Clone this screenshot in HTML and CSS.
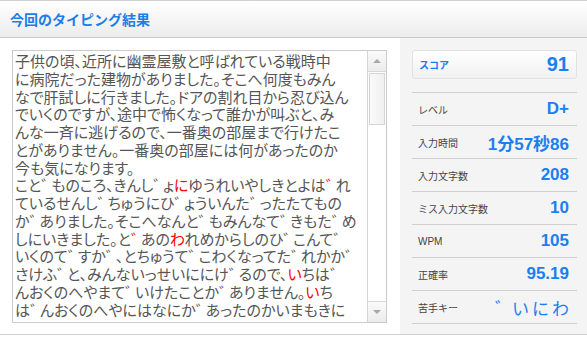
FILE: index.html
```html
<!DOCTYPE html>
<html lang="ja">
<head>
  <meta charset="UTF-8">
  <title>今回のタイピング結果</title>
  <link rel="stylesheet" href="styles.css">
</head>
<body>
  <div class="result">
    <h1 class="result-title">今回のタイピング結果</h1>

    <div class="result-body">
      <!-- typed text -->
      <div class="text-pane">
        <div class="text-box">
          <div class="text-lines">
            <div>子供の頃、近所に幽霊屋敷と呼ばれている戦時中</div>
            <div>に病院だった建物がありました。そこへ何度もみん</div>
            <div>なで肝試しに行きました。ドアの割れ目から忍び込ん</div>
            <div>でいくのですが、途中で怖くなって誰かが叫ぶと、み</div>
            <div>んな一斉に逃げるので、一番奥の部屋まで行けたこ</div>
            <div>とがありません。一番奥の部屋には何があったのか</div>
            <div>今も気になります。</div>
            <div>こと<i>゛</i>ものころ、きんし<i>゛</i>ょ<span class="miss">に</span>ゆうれいやしきとよは<i class="miss">゛</i>れ</div>
            <div>ているせんし<i>゛</i>ちゅうにひ<i>゛</i>ょういんた<i>゛</i>ったたてもの</div>
            <div>か<i>゛</i>ありました。そこへなんと<i>゛</i>もみんなて<i>゛</i>きもた<i>゛</i>め</div>
            <div>しにいきました。と<i class="miss">゛</i>あの<span class="miss">わ</span>れめからしのひ<i>゛</i>こんて<i>゛</i></div>
            <div>いくのて<i>゛</i>すか<i>゛</i>、とちゅうて<i>゛</i>こわくなってた<i>゛</i>れかか<i>゛</i></div>
            <div>さけふ<i>゛</i>と、みんないっせいににけ<i>゛</i>るので、<span class="miss">い</span>ちは<i>゛</i></div>
            <div>んおくのへやまて<i>゛</i>いけたことか<i>゛</i>ありません。<span class="miss">い</span>ち</div>
            <div>は<i>゛</i>んおくのへやにはなにか<i>゛</i>あったのかいまもきに</div>
          </div>
          <div class="scrollbar">
            <div class="sb-btn"><span class="arrow-up"></span></div>
            <div class="sb-track"><div class="sb-thumb"></div></div>
            <div class="sb-btn"><span class="arrow-down"></span></div>
          </div>
        </div>
      </div>

      <!-- scores -->
      <div class="stats">
        <div class="score-box">
          <span class="score-label">スコア</span>
          <span class="score-value">91</span>
        </div>
        <ul class="stat-list">
          <li><span class="stat-label">レベル</span><span class="stat-value">D+</span></li>
          <li><span class="stat-label">入力時間</span><span class="stat-value">1分57秒86</span></li>
          <li><span class="stat-label">入力文字数</span><span class="stat-value">208</span></li>
          <li><span class="stat-label">ミス入力文字数</span><span class="stat-value">10</span></li>
          <li><span class="stat-label">WPM</span><span class="stat-value">105</span></li>
          <li><span class="stat-label">正確率</span><span class="stat-value">95.19</span></li>
          <li><span class="stat-label">苦手キー</span><span class="stat-value weak-keys"><i>゛</i>いにわ</span></li>
        </ul>
      </div>
    </div>
  </div>
</body>
</html>
```

FILE: styles.css
```css
body {
  margin: 0;
  font-family: "Liberation Sans", "Noto Sans CJK JP", sans-serif;
  background: #fff;
}
i {
  font-style: normal;
}
.result {
  border-top: 1px solid #d0d0d0;
  border-bottom: 1px solid #cfcfcf;
  height: 333px;
  display: flex;
  flex-direction: column;
}
.result-title {
  flex-shrink: 0;
  margin: 0;
  height: 36px;
  padding-left: 10px;
  display: flex;
  align-items: center;
  font-size: 14px;
  font-weight: bold;
  color: #1b7fe8;
  background: linear-gradient(#ffffff, #ececec);
  border-bottom: 1px solid #c9c9c9;
}
.result-body {
  flex: 1;
  min-height: 0;
  display: flex;
}
.text-pane {
  width: 400px;
  padding: 12px 13px 11px 12px;
  box-sizing: border-box;
}
.text-box {
  height: 100%;
  display: flex;
  border: 1px solid #cbcbcb;
  box-sizing: border-box;
}
.text-lines {
  flex: 1;
  overflow: hidden;
  padding: 1px 0 0 2px;
  font-family: "Noto Sans CJK JP", sans-serif;
  font-feature-settings: "palt";
  font-size: 15px;
  line-height: 17.75px;
  color: #555;
  white-space: nowrap;
}
.text-lines i {
  letter-spacing: -6px;
  margin-right: 1px;
}
.miss {
  color: #f00;
}
.scrollbar {
  width: 18px;
  display: flex;
  flex-direction: column;
  border-left: 1px solid #d4d4d4;
  background: #fff;
}
.sb-btn {
  height: 20px;
  display: flex;
  align-items: center;
  justify-content: center;
  background: linear-gradient(#fafafa, #ececec);
  border: 1px solid #d8d8d8;
  border-left: none;
  border-right: none;
}
.sb-btn:first-child {
  border-top: none;
}
.sb-btn:last-child {
  border-bottom: none;
}
.arrow-up, .arrow-down {
  width: 0;
  height: 0;
  border-left: 4px solid transparent;
  border-right: 4px solid transparent;
}
.arrow-up {
  border-bottom: 4px solid #a8a8a8;
}
.arrow-down {
  border-top: 4px solid #a8a8a8;
}
.sb-track {
  flex: 1;
  padding-top: 1px;
}
.sb-thumb {
  height: 50px;
  margin: 0 1px;
  border: 1px solid #d4d4d4;
  background: linear-gradient(to right, #fafafa, #f0f0f0);
}
.stats {
  flex: 1;
  background: #f4f4f4;
  padding: 12px 10px 0 12px;
}
.score-box {
  height: 29px;
  display: flex;
  align-items: center;
  justify-content: space-between;
  padding: 0 7px 0 6px;
  border: 1px solid #e2e2e2;
  border-radius: 3px;
  background: linear-gradient(#ffffff, #f1f1f1);
  box-sizing: border-box;
  color: #1b7ff0;
}
.score-label {
  font-size: 10px;
  font-weight: bold;
}
.score-value {
  font-size: 20px;
  font-weight: bold;
}
.stat-list {
  list-style: none;
  margin: 13px 0 0;
  padding: 0;
  border-top: 1px solid #cfcfcf;
}
.stat-list li {
  height: 32px;
  display: flex;
  align-items: center;
  justify-content: space-between;
  padding: 0 8px 0 6px;
  border-bottom: 1px solid #cfcfcf;
}
.stat-label {
  font-size: 10px;
  color: #444;
}
.stat-value {
  font-size: 17px;
  font-weight: bold;
  color: #1b7ff0;
}
.weak-keys {
  font-family: "Noto Sans CJK JP", sans-serif;
  font-weight: normal;
  font-size: 17px;
  letter-spacing: 3px;
  margin-right: -3px;
}
.weak-keys i {
  letter-spacing: 0;
}
```
